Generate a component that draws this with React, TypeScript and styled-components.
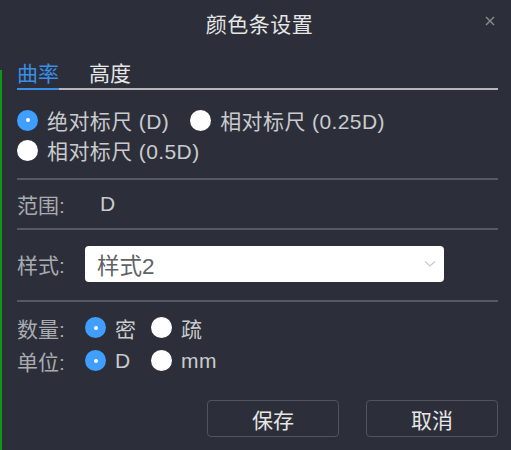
import React from "react";
import styled, { createGlobalStyle } from "styled-components";

const Global = createGlobalStyle`
  html, body { margin: 0; padding: 0; background: #2c2f39; }
  body { font-family: "Liberation Sans", "Noto Sans CJK SC", sans-serif; }
  * { box-sizing: border-box; }
`;

const Dialog = styled.div`
  width: 511px;
  height: 450px;
  display: flex;
  background: #2c2f39;
  overflow: hidden;
`;

const Edge = styled.div`
  width: 2px;
  margin-top: 70px;
  background: #0c9a12;
  flex: none;
`;

const Panel = styled.div`
  flex: 1;
  display: flex;
  flex-direction: column;
  padding: 0 13px 0 15px;
`;

const Header = styled.div`
  position: relative;
  height: 50px;
  line-height: 50px;
  text-align: center;
  font-size: 21px;
  color: #e6e6e6;
  letter-spacing: 0.5px;
  padding-left: 4px;
`;

const Close = styled.button`
  position: absolute;
  right: 2px;
  top: 15px;
  width: 12px;
  height: 12px;
  padding: 0;
  border: none;
  background: transparent;
  display: flex;
  align-items: center;
  justify-content: center;
`;

const Tabs = styled.div`
  margin-top: 10px;
  display: flex;
  gap: 30px;
  border-bottom: 2px solid #b5b7bb;
`;

const Tab = styled.div<{ $active?: boolean }>`
  font-size: 21px;
  line-height: 28px;
  color: ${(p) => (p.$active ? "#3a8ee6" : "#e6e6e6")};
  border-bottom: 2px solid ${(p) => (p.$active ? "#3a8ee6" : "transparent")};
  margin-bottom: -2px;
`;

const RadioRows = styled.div`
  margin-top: 15px;
  display: flex;
  flex-direction: column;
`;

const Row = styled.div`
  height: 30px;
  display: flex;
  align-items: center;
  gap: 21px;
`;

const Option = styled.label<{ $w?: number }>`
  display: flex;
  align-items: center;
  gap: 9px;
  font-size: 21px;
  letter-spacing: 0.4px;
  color: #c9cbcf;
  white-space: nowrap;
  width: ${(p) => (p.$w ? `${p.$w}px` : "auto")};
`;

const Dot = styled.span<{ $on?: boolean }>`
  width: 21px;
  height: 21px;
  border-radius: 50%;
  flex: none;
  background: ${(p) => (p.$on ? "#409eff" : "#ffffff")};
  display: flex;
  align-items: center;
  justify-content: center;
  &::after {
    content: "";
    width: 4px;
    height: 4px;
    border-radius: 50%;
    background: #ffffff;
    display: ${(p) => (p.$on ? "block" : "none")};
  }
`;

const Divider = styled.div<{ $mt: number }>`
  margin-top: ${(p) => p.$mt}px;
  height: 2px;
  background: #565961;
  flex: none;
`;

const FieldRow = styled.div<{ $mt: number; $h: number }>`
  margin-top: ${(p) => p.$mt}px;
  height: ${(p) => p.$h}px;
  display: flex;
  align-items: center;
`;

const Label = styled.span`
  width: 68px;
  flex: none;
  font-size: 21px;
  color: #a9abb1;
  white-space: nowrap;
`;

const Value = styled.span`
  margin-left: 15px;
  font-size: 21px;
  color: #c9cbcf;
`;

const Select = styled.div`
  width: 359px;
  height: 36px;
  background: #ffffff;
  border-radius: 4px;
  display: flex;
  align-items: center;
  justify-content: space-between;
  padding: 0 8px 0 12px;
  font-size: 22.5px;
  color: #606266;
`;

const Choices = styled.div`
  display: flex;
  align-items: center;
`;

const Footer = styled.div`
  margin-top: 23px;
  display: flex;
  justify-content: flex-end;
  gap: 27px;
`;

const Button = styled.button`
  width: 132px;
  height: 37px;
  border: 1px solid #50545c;
  border-radius: 4px;
  background: transparent;
  color: #e6e6e6;
  font-family: "Liberation Sans", "Noto Sans CJK SC", sans-serif;
  font-size: 21px;
  padding: 0;
`;

const Radio = ({ on, w, children }: { on?: boolean; w?: number; children: React.ReactNode }) => (
  <Option $w={w}>
    <Dot $on={on} />
    <span>{children}</span>
  </Option>
);

export default function App() {
  return (
    <>
      <Global />
      <Dialog>
        <Edge />
        <Panel>
          <Header>
            颜色条设置
            <Close aria-label="close">
              <svg width="10" height="10" viewBox="0 0 10 10">
                <path d="M1 1L9 9M9 1L1 9" stroke="#8a8c92" strokeWidth="1.4" />
              </svg>
            </Close>
          </Header>
          <Tabs>
            <Tab $active>曲率</Tab>
            <Tab>高度</Tab>
          </Tabs>
          <RadioRows>
            <Row>
              <Radio on>绝对标尺 (D)</Radio>
              <Radio>相对标尺 (0.25D)</Radio>
            </Row>
            <Row>
              <Radio>相对标尺 (0.5D)</Radio>
            </Row>
          </RadioRows>
          <Divider $mt={13} />
          <FieldRow $mt={9} $h={30}>
            <Label>范围:</Label>
            <Value>D</Value>
          </FieldRow>
          <Divider $mt={9} />
          <FieldRow $mt={16} $h={36}>
            <Label>样式:</Label>
            <Select>
              <span>样式2</span>
              <svg width="12" height="8" viewBox="0 0 12 8">
                <path d="M1 1.5L6 6L11 1.5" fill="none" stroke="#c7cad1" strokeWidth="1.2" />
              </svg>
            </Select>
          </FieldRow>
          <Divider $mt={18} />
          <FieldRow $mt={9} $h={33}>
            <Label>数量:</Label>
            <Choices>
              <Radio on w={66}>密</Radio>
              <Radio>疏</Radio>
            </Choices>
          </FieldRow>
          <FieldRow $mt={0} $h={33}>
            <Label>单位:</Label>
            <Choices>
              <Radio on w={66}>D</Radio>
              <Radio>mm</Radio>
            </Choices>
          </FieldRow>
          <Footer>
            <Button>保存</Button>
            <Button>取消</Button>
          </Footer>
        </Panel>
      </Dialog>
    </>
  );
}
